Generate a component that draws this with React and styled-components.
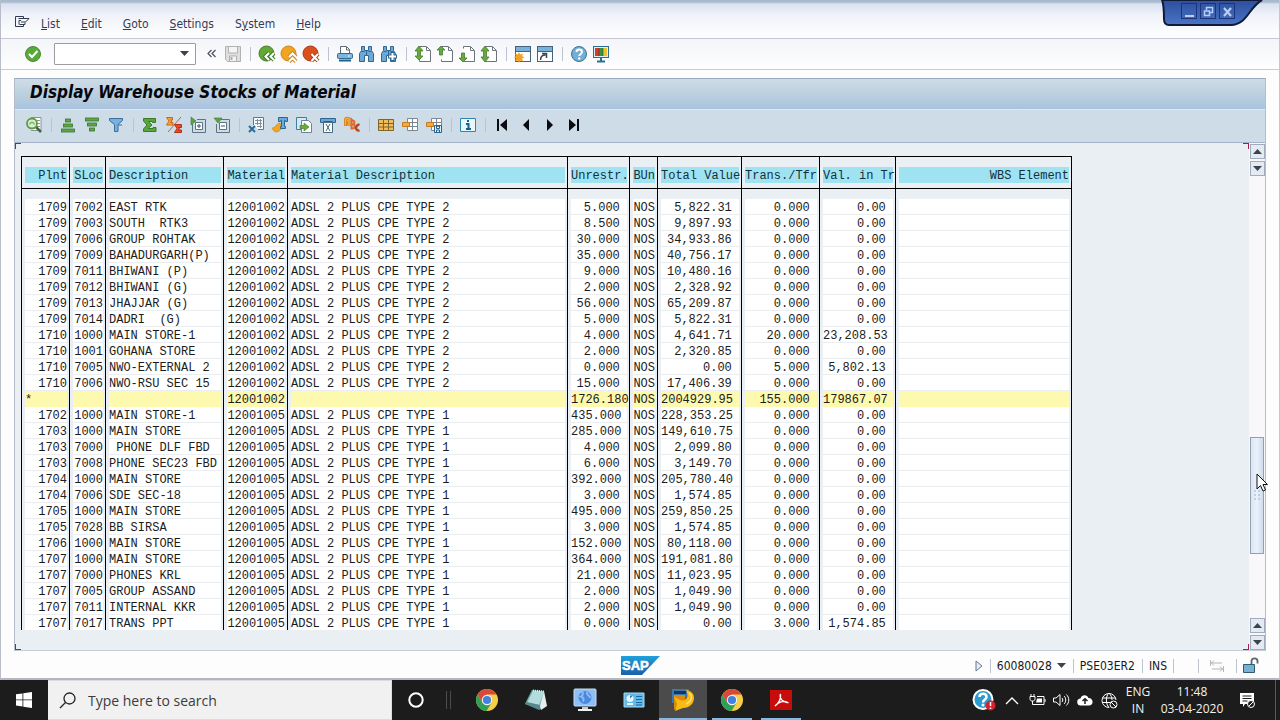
import React from 'react';
import styled, { createGlobalStyle, css } from 'styled-components';

const GlobalStyle = createGlobalStyle`
  * {
    box-sizing: border-box;
  }

  body {
    margin: 0;
    font-family: 'DejaVu Sans Condensed', Tahoma, sans-serif;
    font-size: 12px;
    color: #1f2a44;
  }

  button {
    font: inherit;
    color: inherit;
    border: 0;
    padding: 0;
    background: none;
  }
`;

const Screen = styled.div`
  display: flex;
  flex-direction: column;
  height: 100vh;
  overflow: hidden;
`;

const SapWindow = styled.main`
  position: relative;
  flex: 1;
  min-height: 0;
  display: flex;
  flex-direction: column;
  background: #fdfdfe;
  border-left: 1px solid #b9bcc9;
  border-right: 1px solid #c3c6d4;
  border-bottom: 2px solid #b4b6c0;
`;

const MenuBar = styled.nav`
  display: flex;
  align-items: center;
  gap: 21px;
  height: 39px;
  padding: 9px 13px 0;
  background: linear-gradient(#a9b9cf 0, #a9b9cf 2px, #d9e2f0 4px, #eef1f8 14px, #fcfcfe 32px);
  border-bottom: 1px solid #c6c8d4;
`;

const MenuIcon = styled.button`
  width: 16px;
  height: 20px;
  margin-right: -10px;
`;

const MenuItem = styled.button`
  line-height: 16px;
  color: #343c5c;
`;

const WindowControls = styled.div`
  position: absolute;
  top: 0;
  right: 16px;
  width: 102px;
  height: 28px;

  > svg {
    position: absolute;
  }
`;

const ControlRow = styled.div`
  position: relative;
  display: flex;
  gap: 3px;
  padding: 3px 0 0 20px;
`;

const ControlButton = styled.button`
  width: 16px;
  height: 16px;
  border: 1px solid #1f3478;
  color: #b9cdf5;
  line-height: 0;
`;

const StandardBar = styled.div`
  display: flex;
  align-items: center;
  height: 31px;
  padding: 0 0 1px 21px;
  background: linear-gradient(#f4f5fa, #fefefe);
  border-bottom: 1px solid #c9cbd6;
`;

const IconButton = styled.button`
  display: flex;
  align-items: center;
  justify-content: center;
  flex: none;
  width: ${p => p.$size || 22}px;
  height: 24px;
`;

const Separator = styled.span`
  flex: none;
  width: 2px;
  height: 14px;
  margin: 0 ${p => p.$gap || 5}px;
  border-right: 1px solid #bcc3ce;
`;

const CommandBox = styled.label`
  display: flex;
  align-items: center;
  width: 142px;
  height: 22px;
  margin: 0 4px 0 10px;
  padding-right: 6px;
  background: #fff;
  border: 1px solid #9a9ca2;
  border-radius: 1px;
`;

const CommandInput = styled.input`
  flex: 1;
  min-width: 0;
  border: 0;
  outline: 0;
  background: none;
`;

const Panel = styled.section`
  flex: 1;
  min-height: 0;
  display: flex;
  flex-direction: column;
  margin: 8px 13px 0;
  border: 1px solid #99a9bf;
  border-color: #99a9bf #b4bccd #c6cdd4 #b4bccd;
`;

const TitleBar = styled.header`
  height: 31px;
  padding: 0 15px;
  background: linear-gradient(#cfdce8, #bcd0de 50%, #a9c3de);
  border-bottom: 1px solid #dfe8f0;
`;

const Title = styled.h1`
  margin: 0;
  font-size: 17px;
  font-style: italic;
  font-weight: 700;
  line-height: 26px;
  color: #05070c;
`;

const AppBar = styled.div`
  display: flex;
  align-items: center;
  height: 33px;
  padding: 0 0 3px 7px;
  background: #cddce7;
  border-bottom: 1px solid #a4b1c6;
`;

const ListArea = styled.div`
  position: relative;
  flex: 1;
  min-height: 0;
  display: flex;
  background: #eaeff4;
`;

const Corner = styled.i`
  position: absolute;
  width: 6px;
  height: 6px;
  border: 0 solid #a02048;
  ${p => (p.$bottom ? css`bottom: 0; border-bottom-width: 1px;` : css`top: 0; border-top-width: 1px;`)}
  ${p => (p.$right ? css`right: 16px; border-right-width: 1px;` : css`left: 0; border-left-width: 1px;`)}
`;

const ListView = styled.div`
  flex: 1;
  min-width: 0;
  margin: 13px 0 20px 6px;
  overflow: hidden;
`;

const StockTable = styled.table`
  table-layout: fixed;
  width: 1051px;
  border-collapse: separate;
  border-spacing: 0;
  border-right: 1px solid #000;
  font-family: 'Liberation Mono', 'Courier New', monospace;
  font-size: 12px;
  line-height: 14px;
  color: #1c1c1c;
`;

const HeadCell = styled.th`
  padding: 12px 2px 5px 3px;
  border: solid #000;
  border-width: 1px 0 1px 1px;
  background: linear-gradient(#9fe3f2, #9fe3f2) left 3px bottom 5px / calc(100% - 5px) 16px no-repeat;
  font-weight: 400;
  text-align: ${p => p.$align || 'left'};
  white-space: pre;
  color: #12303d;
`;

const Cell = styled.td`
  height: 16px;
  padding: 2px 2px 0 3px;
  border-left: 1px solid #000;
  background: linear-gradient(${p => (p.$total ? '#fdf9ae, #fdf9ae' : '#fff 15px, #ebeef0 15px')})
    left 3px bottom / calc(100% - 5px) 16px no-repeat;
  text-align: ${p => p.$align || 'left'};
  white-space: pre;

  tr:first-child > & {
    padding-top: 12px;
  }
`;

const ScrollBar = styled.div`
  display: flex;
  flex-direction: column;
  gap: 2px;
  width: 16px;
  padding: 1px 0 0 1px;
  background: #f8f8fb;
`;

const ScrollButton = styled.button`
  display: flex;
  align-items: center;
  justify-content: center;
  width: 15px;
  height: 15px;
  border: 1px solid #a3acbf;
  background: #e3eaf1;
`;

const ScrollTrack = styled.div`
  flex: 1;
  display: flex;
  flex-direction: column;
`;

const ScrollGap = styled.div`
  flex: ${p => p.$share};
`;

const ScrollThumb = styled.div`
  flex: 116;
  display: flex;
  align-items: center;
  justify-content: center;
  width: 14px;
  border: 1px solid #93a0b3;
  background: linear-gradient(90deg, #dce6f3, #e9f1fb 50%, #cfdcec);
`;

const MousePointer = styled.svg`
  position: absolute;
  right: -3px;
  top: 330px;
`;

const StatusBar = styled.footer`
  display: grid;
  grid-template-columns: 1fr auto 1fr;
  align-items: center;
  height: 27px;
  padding: 2px 19px 0;
  color: #17191f;
`;

const StatusFields = styled.div`
  display: flex;
  align-items: center;
  justify-content: flex-end;
`;

const StatusGap = styled.span`
  width: ${p => p.$width}px;
`;

const TaskBar = styled.footer`
  display: flex;
  align-items: stretch;
  height: 40px;
  background: #1c1c1c;
  color: #f3f3f3;
`;

const SearchBox = styled.label`
  display: flex;
  align-items: center;
  gap: 10px;
  width: 344px;
  padding-left: 11px;
  background: #f1f1f1;
  border: 1px solid #dcdcdc;
  border-left: 0;
`;

const SearchInput = styled.input`
  flex: 1;
  min-width: 0;
  border: 0;
  outline: 0;
  background: none;
  font-family: 'Open Sans', 'Segoe UI', sans-serif;
  font-size: 14px;

  &::placeholder {
    color: #3c3c3c;
    opacity: 1;
  }
`;

const TaskButton = styled.button`
  display: flex;
  align-items: center;
  justify-content: center;
  width: ${p => p.$width || 49}px;
  background: ${p => (p.$active ? '#4b4b4b' : 'none')};
`;

const OpenTask = styled(TaskButton)`
  width: ${p => (p.$active ? 48 : 40)}px;
  margin: ${p => (p.$active ? '0 5px 0 1px' : '0 9px 0 0')};
  padding-top: 2px;
  border-bottom: 2px solid #86b9e4;
`;

const Tray = styled.div`
  display: flex;
  align-items: stretch;
  margin-left: auto;
  padding-right: 4px;
  font-family: 'Open Sans', 'Segoe UI', sans-serif;
`;

const TrayText = styled.button`
  width: ${p => p.$width}px;
  line-height: 17px;
  text-align: center;
  white-space: pre-line;
`;

const DesktopEdge = styled.span`
  width: 1px;
  background: #5a5a5a;
`;

const Icon = ({ children, w = 18, h = 18, box }) => (
  <svg width={w} height={h} viewBox={box || `0 0 ${w} ${h}`} fill="none" aria-hidden="true">
    {children}
  </svg>
);

const DownArrow = ({ up }) => (
  <Icon w={9} h={5}><path d={up ? 'M0 5L4.500 0 9 5z' : 'M0 0h9L4.500 5z'} fill="#3a434e" /></Icon>
);

const CheckIcon = () => (
  <Icon>
    <circle cx="9" cy="9" r="7.500" fill="#58a83a" stroke="#478c32" />
    <path d="M5 9l3 3 5.500-6" stroke="#fff" strokeWidth="2" />
  </Icon>
);

const SaveIcon = () => (
  <Icon>
    <path d="M1.500 1.500h15v15h-13l-2-2z" fill="#dedede" stroke="#b1b1b1" />
    <path d="M4.500 2v6h9V2M5.500 16v-5h7v5" fill="#f4f4f4" stroke="#b1b1b1" />
    <path d="M7.500 12v3" stroke="#aaa" strokeWidth="2" />
  </Icon>
);

const BallIcon = ({ kind }) => {
  const fill = { back: '#62a834', up: '#f2a421', cancel: '#d9501c' }[kind];
  const edge = { back: '#447c28', up: '#c98420', cancel: '#a63c14' }[kind];
  const mark = {
    back: 'M11 8l-3.500 3.500L11 15M16 8l-3.500 3.500L16 15',
    up: 'M9 12l3.500-3.500L16 12M9 16.500l3.500-3.500 3.500 3.500',
    cancel: 'M9.500 9l6.500 7M16 9l-6.500 7',
  }[kind];
  return (
    <Icon>
      <circle cx="8.500" cy="8.500" r="7.500" fill={fill} stroke={edge} />
      <path d={mark} stroke={edge} strokeWidth="4" />
      <path d={mark} stroke="#fff" strokeWidth="2" />
    </Icon>
  );
};

const PrintIcon = () => (
  <Icon>
    <path d="M4.500 8V1.500h6l3 3V8" fill="#fff" stroke="#5c6a78" />
    <path d="M10.500 2v3h3" stroke="#5c6a78" />
    <rect x="1.500" y="8.500" width="15" height="5" rx="1" fill="#7db5dc" stroke="#2d6c94" />
    <path d="M3 15.500h12" stroke="#1f5f88" strokeWidth="2" />
    <path d="M12 11h2" stroke="#fff" />
  </Icon>
);

const FindIcon = ({ plus }) => (
  <Icon>
    <path d="M3.500 1.500h3v4h4v-4h3v4l2 3v8h-5v-6h-4v6h-5v-8l2-3z" fill="#6fa9d3" stroke="#2f6794" />
    <path d="M3.500 6.500h3M10.500 6.500h3M8.500 6v4" stroke="#2f6794" />
    {plus && (
      <>
        <path d="M12.500 7v9M8 11.500h9" stroke="#2f6794" strokeWidth="4" />
        <path d="M12.500 8v7M9 11.500h7" stroke="#fff" strokeWidth="2" />
      </>
    )}
  </Icon>
);

const PageIcon = ({ kind }) => {
  const arrow = {
    first: 'M5 1l4 5H6.500v5H9l-4 4-4-4h2.500V6H1z',
    prev: 'M5 1l4 4H6.500v5h-3V5H1z',
    next: 'M5 17l4-4H6.500V8h-3v5H1z',
    last: 'M5 1l4 5H6.500v6H9l-4 5-4-5h2.500V6H1z',
  }[kind];
  return (
    <Icon>
      <path d="M5.500 3.500v-2h7l4 4v11h-11v-2" fill="#fff" stroke="#6b737b" />
      <path d="M12.500 2v3.500H16" stroke="#6b737b" />
      <path d={arrow} fill="#69a83c" stroke="#3f7f2d" strokeWidth="0.800" />
    </Icon>
  );
};

const WindowIcon = ({ star }) => (
  <Icon>
    <rect x="1.500" y="1.500" width="15" height="15" fill="#fff" stroke="#41637c" />
    <path d="M2 2h14v4H2z" fill="#76b2dc" />
    <path d="M2 6.500h14" stroke="#41637c" />
    {star ? (
      <path d="M5 7l1.200 2.500L9 8.500 8 11l2.500 1.500L8 13.500l1 3-2.800-1L5 18l-1.200-2.500L1 16.500l1-3-2-1L2 11 1 8.500l2.800 1z" fill="#f4a21e" />
    ) : (
      <path d="M4.500 15c0-4 2-5 5-5M6 8.500h4.500V13" stroke="#384653" strokeWidth="1.500" />
    )}
  </Icon>
);

const HelpIcon = () => (
  <Icon>
    <circle cx="9" cy="9" r="7.500" fill="#72afd6" stroke="#3c7194" />
    <path d="M6.500 7c0-3.300 5.500-3.300 5.500 0 0 1.800-2.700 2-2.700 4" stroke="#fff" strokeWidth="1.900" />
    <circle cx="9.200" cy="13.500" r="1.200" fill="#fff" />
  </Icon>
);

const LayoutIcon = () => (
  <Icon>
    <rect x="1.500" y="1.500" width="15" height="11" fill="#dceef6" stroke="#2b6f94" />
    <path d="M3 3h4v8H3z" fill="#d93a25" />
    <path d="M7 3h4v8H7z" fill="#2f9547" />
    <path d="M11 3h4v8h-4z" fill="#efc12b" />
    <path d="M7 3v8M11 3v8" stroke="#333" strokeWidth="0.500" />
    <path d="M9 13v3M5 16.500h8" stroke="#2b6f94" strokeWidth="2" />
  </Icon>
);

const DetailIcon = () => (
  <Icon>
    <path d="M6 1.500h10v13H6" fill="#fff" stroke="#8b9298" />
    <path d="M12 4.500h3M12 7.500h3M12 10.500h3" stroke="#8b9298" />
    <path d="M11 11l5 5" stroke="#47604a" strokeWidth="2.500" />
    <circle cx="7" cy="7.500" r="5" fill="#d9efd1" stroke="#5e9840" strokeWidth="1.800" />
    <path d="M4.500 8.500c1-3 4-3 5 0" stroke="#7bb364" strokeWidth="1.500" />
  </Icon>
);

const SortIcon = ({ desc }) => (
  <Icon>
    <g transform={desc ? 'matrix(1 0 0 -1 0 18)' : undefined} fill="#61a73f" stroke="#39733b" strokeWidth="0.800">
      <rect x="2.500" y="13" width="13" height="3" />
      <rect x="4.500" y="8" width="9" height="3" />
      <rect x="6.500" y="3" width="5" height="3" />
    </g>
  </Icon>
);

const FilterIcon = () => (
  <Icon>
    <path d="M2.500 2.500h13v2l-4.500 4v7H7.500v-7l-5-4z" fill="#79b0dc" stroke="#376f9e" />
    <path d="M11 9h4" stroke="#376f9e" />
  </Icon>
);

const SumIcon = () => (
  <Icon><path d="M2.500 2.500h12v4h-3V5.500h-4L11 9l-4 3.500h5v-1h3v4h-12.500V13L6 9 2.500 5z" fill="#5ba53b" stroke="#3a7a2f" /></Icon>
);

const SubtotalIcon = () => (
  <Icon>
    <path d="M16 1L3 16" stroke="#a66b4e" />
    <path d="M1.500 1.500h6v2.500h-2l1.500 1-1.500 1.500h2.500v2.500h-6.500l2.500-4z" fill="#f7a42b" stroke="#c96a1a" />
    <path d="M9.500 8.500h7v3h-3l1 1-1 1.500h3v2.500h-7l2.500-4z" fill="#ea4a25" stroke="#b52f17" />
  </Icon>
);

const ExpandIcon = ({ minus }) => (
  <Icon>
    <path d="M8 3.500h8.500v13h-13V8" stroke="#5b7485" />
    <path d="M6.500 6.500h7v7h-7z" fill="#fff" stroke="#5b7485" />
    <path d={minus ? 'M8 10h4' : 'M8 10h4M10 8v4'} stroke="#34505f" />
    <path d={minus ? 'M1 2h8L5 7z' : 'M2 1l5 4-5 4z'} fill="#5ca33f" stroke="#3c7a32" strokeWidth="0.600" />
  </Icon>
);

const ExcelIcon = () => (
  <Icon>
    <path d="M6.500 9V1.500h10v12H11" fill="#f7fafc" stroke="#67757f" />
    <path d="M8 4.500h7M8 7.500h7M10 10.500h5M10.500 3v6M13.500 3v9" stroke="#85929b" />
    <path d="M2 10l6 6M8 10l-6 6" stroke="#286d97" strokeWidth="2" />
  </Icon>
);

const WordIcon = () => (
  <Icon>
    <path d="M1 12c4 0 3-4 8-5l2 3c-1 4-3 6-6 6-2 0-3-2-4-4z" fill="#f4a51f" stroke="#c77f19" strokeWidth="0.600" />
    <path d="M7.500 1.500h9v4h-2v-1h-1v6h1v2h-5v-2h1v-6h-1v1h-2z" fill="#6cabd8" stroke="#2c6690" />
  </Icon>
);

const ExportIcon = () => (
  <Icon>
    <path d="M1.500 1.500h10v12h-10z" fill="#d3e9f4" stroke="#3f7da3" />
    <path d="M6.500 4.500h7l3 3v9h-10z" fill="#fff" stroke="#6f8291" />
    <path d="M5 9.500h4V7l5 4-5 4v-2.500H5z" fill="#67ab3f" stroke="#3c7a32" strokeWidth="0.600" />
  </Icon>
);

const MailTextIcon = () => (
  <Icon>
    <path d="M1.500 2.500h15v4h-3v-1h-9v1h-3z" fill="#69a7d2" stroke="#2c6690" />
    <path d="M4.500 6.500h9v10h-9z" fill="#fff" stroke="#47697f" />
    <path d="M7 8l4 7M11 8l-4 7" stroke="#47697f" />
  </Icon>
);

const AbcIcon = () => (
  <Icon>
    <path d="M2.500 10V4c0-2.500 3.500-2.500 3.500 0v6M2.500 7H6" stroke="#d67a1c" strokeWidth="3" />
    <path d="M2.500 9.500V4c0-2.500 3.500-2.500 3.500 0v5.500" stroke="#f7b13c" strokeWidth="1.500" />
    <path d="M8.500 3.500v9h1c3 0 3-4 0-4 2.500 0 2.500-4 0-4z" stroke="#e2692a" strokeWidth="2" />
    <path d="M16.500 9c-4-1.500-5 6.500 0 5.500" stroke="#b8462a" strokeWidth="2.500" />
  </Icon>
);

const GridIcon = ({ kind }) => (
  <Icon>
    {!kind && <path d="M1.500 3.500h15v11h-15zM1.500 7.500h15M1.500 11h15M6.500 3.500v11M11.500 3.500v11" fill="#f2bd58" stroke="#7d6431" />}
    {kind && (
      <>
        <path d="M6.500 2.500h10v12h-10zM6.500 6.500h10M6.500 10.500h10M11.500 2.500v12" fill="#fff" stroke="#7c8791" />
        <path d="M1.500 6.500h7v4h-7z" fill="#f5a93c" stroke="#c47b22" />
      </>
    )}
    {kind === 'save' && <path d="M9.500 9.500h7v7h-7zM11.500 9.500v3h3v-3M11.500 16v-2h3v2" fill="#dceffa" stroke="#27648c" />}
  </Icon>
);

const InfoIcon = () => (
  <Icon>
    <path d="M1.500 2.500h15v13h-15z" fill="#e9f7fd" stroke="#2c86b1" />
    <path d="M9 4v2M7 8h2.500v5M7 13h5" stroke="#15618b" strokeWidth="2" />
  </Icon>
);

const StepIcon = ({ kind }) => {
  const flip = kind === 'next' || kind === 'last';
  const bar = kind === 'first' || kind === 'last';
  return (
    <Icon>
      <g transform={flip ? 'matrix(-1 0 0 1 18 0)' : undefined} fill="#0a0c12">
        <path d={bar ? 'M14 3v12L7 9zM4 3h2v12H4z' : 'M12 3v12L6 9z'} />
      </g>
    </Icon>
  );
};

const ChromeIcon = () => (
  <Icon w={22} h={22}>
    <circle cx="11" cy="11" r="11" fill="#f6cf46" />
    <path d="M1.500 5.500A11 11 0 0 1 20.500 5.500H11L6.300 13.800z" fill="#d9493a" />
    <path d="M1.500 5.500A11 11 0 0 0 10.500 22l5-8.300H6.300z" fill="#2f9e58" />
    <circle cx="11" cy="11" r="5.200" fill="#f3f3f3" />
    <circle cx="11" cy="11" r="4.100" fill="#4480de" />
  </Icon>
);

const NotebookIcon = () => (
  <Icon w={24} h={24}>
    <path d="M8 2l12 1-3 17-16-4z" fill="#6faeb1" />
    <path d="M9 3l11 1-5 13-12-2z" fill="#b4dcdc" />
    <path d="M1 16l2-2 13 3 1 4-2 1z" fill="#57898c" />
    <path d="M20 3l3 15-6 4-1-4z" fill="#e4eeee" />
    <path d="M9 2.500l11 1" stroke="#eee" strokeWidth="2" strokeDasharray="1 1" />
  </Icon>
);

const RemoteIcon = () => (
  <Icon w={24} h={24}>
    <rect x="1" y="1" width="22" height="17" rx="1" fill="#8fc0f5" stroke="#c8dcf3" />
    <circle cx="12" cy="9.500" r="6.500" fill="#4b88de" />
    <path d="M8 3.500c3 1 2 4 0 5 3 1 3 3 2 5M14 4c-1 3 3 3 3 6" stroke="#8dbcf5" strokeWidth="2" />
    <path d="M9 19h6v2H9z" fill="#c4ccd4" />
    <path d="M5 21h14v2H5z" fill="#eef1f4" />
  </Icon>
);

const CardIcon = () => (
  <Icon w={22} h={18}>
    <path d="M1 2h20v14H1z" fill="#62b9ea" stroke="#a5daf5" />
    <circle cx="7" cy="7.500" r="3.500" fill="#e9f6fd" />
    <path d="M7 7.500V4.500h3z" fill="#2b77b2" />
    <path d="M4 13h6" stroke="#e9f6fd" strokeWidth="2" />
    <path d="M13 5.500h6M13 8.500h6M13 11.500h6M13 14h6" stroke="#1d669f" />
  </Icon>
);

const SapGuiIcon = () => (
  <Icon w={24} h={24}>
    <path d="M1 1h17l-4 14H1z" fill="#3b76ad" />
    <path d="M3 3h12v3H3z" fill="#15365c" />
    <path d="M3 7h11v6L3 22z" fill="#d98a08" />
    <path d="M3 8c5 5 9 5 11 4 3-2 3-6 1-10 8 1 10 8 6 14-3 3-6 4-9 4l-8 3 2-7z" fill="#fbb914" />
    <path d="M18 5c4 3 3 8-3 11" stroke="#ffe27a" strokeWidth="1.500" />
  </Icon>
);

const PdfIcon = () => (
  <Icon w={22} h={22}>
    <path d="M0 1h22v20H0z" fill="#c80c0c" />
    <path d="M5 17c4-3 6-8 5.500-12C9 9 13 14 17.500 13.500 14 11 8 13 5 17z" stroke="#fff" strokeWidth="1.300" />
  </Icon>
);

const SapLogo = () => (
  <svg width="39" height="19" viewBox="0 0 39 19" role="img" aria-label="SAP">
    <defs>
      <linearGradient id="sapBlue" x1="0" y1="0" x2="0" y2="1">
        <stop offset="0" stopColor="#1fa0dc" />
        <stop offset="1" stopColor="#1b5fa9" />
      </linearGradient>
    </defs>
    <path d="M0 0h39L21 19H0z" fill="url(#sapBlue)" />
    <text x="1" y="14" fontFamily="Liberation Sans, Arial, sans-serif" fontSize="13" fontWeight="700" fill="#fff" stroke="#fff" strokeWidth="0.500">SAP</text>
  </svg>
);

const columns = [
  { name: 'Plnt', width: 48, align: 'right' },
  { name: 'SLoc', width: 36, align: 'right' },
  { name: 'Description', width: 118 },
  { name: 'Material', width: 64, align: 'right' },
  { name: 'Material Description', width: 280 },
  { name: 'Unrestr.', width: 62, align: 'right', number: true },
  { name: 'BUn', width: 28, align: 'right' },
  { name: 'Total Value', width: 84, align: 'right', number: true },
  { name: 'Trans./Tfr', width: 78, align: 'right', number: true },
  { name: 'Val. in Tr', width: 76, align: 'right', number: true },
  { name: 'WBS Element', width: 176, align: 'right' },
];

const stock = (type, list) =>
  list.map(([plant, sloc, text, free, value, transit = '0.000', transitValue = '0.00']) => [
    plant, sloc, text, `1200100${type === 2 ? 2 : 5}`, `ADSL 2 PLUS CPE TYPE ${type}`,
    free, 'NOS', value, transit, transitValue, '',
  ]);

const rows = [
  ...stock(2, [
    ['1709', '7002', 'EAST RTK', '5.000', '5,822.31'],
    ['1709', '7003', 'SOUTH  RTK3', '8.500', '9,897.93'],
    ['1709', '7006', 'GROUP ROHTAK', '30.000', '34,933.86'],
    ['1709', '7009', 'BAHADURGARH(P)', '35.000', '40,756.17'],
    ['1709', '7011', 'BHIWANI (P)', '9.000', '10,480.16'],
    ['1709', '7012', 'BHIWANI (G)', '2.000', '2,328.92'],
    ['1709', '7013', 'JHAJJAR (G)', '56.000', '65,209.87'],
    ['1709', '7014', 'DADRI  (G)', '5.000', '5,822.31'],
    ['1710', '1000', 'MAIN STORE-1', '4.000', '4,641.71', '20.000', '23,208.53'],
    ['1710', '1001', 'GOHANA STORE', '2.000', '2,320.85'],
    ['1710', '7005', 'NWO-EXTERNAL 2', '0.000', '0.00', '5.000', '5,802.13'],
    ['1710', '7006', 'NWO-RSU SEC 15', '15.000', '17,406.39'],
  ]),
  ['*     ', '', '', '12001002', '', '1726.180', 'NOS', '2004929.95', '155.000', '179867.07', ''],
  ...stock(1, [
    ['1702', '1000', 'MAIN STORE-1', '435.000', '228,353.25'],
    ['1703', '1000', 'MAIN STORE', '285.000', '149,610.75'],
    ['1703', '7000', ' PHONE DLF FBD', '4.000', '2,099.80'],
    ['1703', '7008', 'PHONE SEC23 FBD', '6.000', '3,149.70'],
    ['1704', '1000', 'MAIN STORE', '392.000', '205,780.40'],
    ['1704', '7006', 'SDE SEC-18', '3.000', '1,574.85'],
    ['1705', '1000', 'MAIN STORE', '495.000', '259,850.25'],
    ['1705', '7028', 'BB SIRSA', '3.000', '1,574.85'],
    ['1706', '1000', 'MAIN STORE', '152.000', '80,118.00'],
    ['1707', '1000', 'MAIN STORE', '364.000', '191,081.80'],
    ['1707', '7000', 'PHONES KRL', '21.000', '11,023.95'],
    ['1707', '7005', 'GROUP ASSAND', '2.000', '1,049.90'],
    ['1707', '7011', 'INTERNAL KKR', '2.000', '1,049.90'],
    ['1707', '7017', 'TRANS PPT', '0.000', '0.00', '3.000', '1,574.85'],
  ]),
];

// amounts keep one blank at the end for the sign, unless they fill the column
const cellText = (value, column) =>
  column.number && value !== '1726.180' ? `${value} ` : value;

const menus = [['', 'L', 'ist'], ['', 'E', 'dit'], ['', 'G', 'oto'], ['', 'S', 'ettings'], ['S', 'y', 'stem'], ['', 'H', 'elp']];

const standardTools = [
  [['Save', <SaveIcon />]],
  [['Back', <BallIcon kind="back" />], ['Exit', <BallIcon kind="up" />], ['Cancel', <BallIcon kind="cancel" />]],
  [['Print', <PrintIcon />], ['Find', <FindIcon />], ['Find next', <FindIcon plus />]],
  [['First page', <PageIcon kind="first" />], ['Previous page', <PageIcon kind="prev" />], ['Next page', <PageIcon kind="next" />], ['Last page', <PageIcon kind="last" />]],
  [['New session', <WindowIcon star />], ['Create shortcut', <WindowIcon />]],
  [['Help', <HelpIcon />], ['Customize layout', <LayoutIcon />]],
];

const listTools = [
  [['Details', <DetailIcon />]],
  [['Sort ascending', <SortIcon />], ['Sort descending', <SortIcon desc />], ['Filter', <FilterIcon />]],
  [['Total', <SumIcon />], ['Subtotal', <SubtotalIcon />], ['Expand', <ExpandIcon />], ['Collapse', <ExpandIcon minus />]],
  [['Spreadsheet', <ExcelIcon />], ['Word processing', <WordIcon />], ['Local file', <ExportIcon />], ['Send', <MailTextIcon />], ['ABC analysis', <AbcIcon />]],
  [['Change layout', <GridIcon />], ['Select layout', <GridIcon kind="pick" />], ['Save layout', <GridIcon kind="save" />]],
  [['Information', <InfoIcon />]],
  [['First column', <StepIcon kind="first" />], ['Column left', <StepIcon kind="prev" />], ['Column right', <StepIcon kind="next" />], ['Last column', <StepIcon kind="last" />]],
];

const ToolGroups = ({ groups, size, gap }) =>
  groups.map((tools, i) => (
    <React.Fragment key={tools[0][0]}>
      {i > 0 && <Separator $gap={gap} />}
      {tools.map(([label, icon]) => (
        <IconButton key={label} $size={size} aria-label={label}>{icon}</IconButton>
      ))}
    </React.Fragment>
  ));

const Menu = () => (
  <MenuBar>
    <MenuIcon aria-label="System menu">
      <Icon w={16} h={14}>
        <path d="M9.500 3V1.500h-8v10h8V10" stroke="#333b52" />
        <path d="M4.500 3.500H15L11.500 7H7M11 7.500v2H5.500M7 5.500h-2v4" stroke="#333b52" />
      </Icon>
    </MenuIcon>
    {menus.map(([before, key, after]) => (
      <MenuItem key={key}>{before}<u>{key}</u>{after}</MenuItem>
    ))}
  </MenuBar>
);

const Controls = () => (
  <WindowControls>
    <Icon w={102} h={28}>
      <defs>
        <linearGradient id="tab" x1="0" y1="0" x2="0" y2="1">
          <stop offset="0" stopColor="#2c4f9e" />
          <stop offset="1" stopColor="#4a74c4" />
        </linearGradient>
      </defs>
      <path d="M1 0c2 5 2 10 2 19 0 4 2 6 5 6h62c16 0 18-18 31-25z" fill="url(#tab)" stroke="#101a38" strokeWidth="2" />
    </Icon>
    <ControlRow>
      <ControlButton aria-label="Minimize"><Icon w={13} h={13}><path d="M2 11h9" stroke="currentColor" strokeWidth="2" /></Icon></ControlButton>
      <ControlButton aria-label="Restore"><Icon w={13} h={13}><path d="M4.500 5V2.500h6v5H8M2.500 6h5v4.500h-5z" stroke="currentColor" strokeWidth="1.500" /></Icon></ControlButton>
      <ControlButton aria-label="Close"><Icon w={13} h={13}><path d="M3 3l7 8M10 3l-7 8" stroke="currentColor" strokeWidth="2.200" /></Icon></ControlButton>
    </ControlRow>
  </WindowControls>
);

const StockList = () => (
  <StockTable>
    <colgroup>
      {columns.map(c => <col key={c.name} style={{ width: c.width }} />)}
    </colgroup>
    <thead>
      <tr>{columns.map(c => <HeadCell key={c.name} $align={c.align}>{c.name}</HeadCell>)}</tr>
    </thead>
    <tbody>
      {rows.map((row, i) => (
        <tr key={i}>
          {row.map((value, j) => (
            <Cell key={j} $align={columns[j].align} $total={row[1] === ''}>
              {value && cellText(value, columns[j])}
            </Cell>
          ))}
        </tr>
      ))}
    </tbody>
  </StockTable>
);

const Scroller = () => (
  <ScrollBar>
    <ScrollButton aria-label="Page up"><DownArrow up /></ScrollButton>
    <ScrollButton aria-label="Line down"><DownArrow /></ScrollButton>
    <ScrollTrack>
      <ScrollGap $share={261} />
      <ScrollThumb>
        <Icon w={6} h={10}><path d="M1 0v10M5 0v10" stroke="#9fb0c6" strokeWidth="1" strokeDasharray="2 2" /></Icon>
      </ScrollThumb>
      <ScrollGap $share={63} />
    </ScrollTrack>
    <ScrollButton aria-label="Line up"><DownArrow up /></ScrollButton>
    <ScrollButton aria-label="Page down"><DownArrow /></ScrollButton>
    <MousePointer width="12" height="19" viewBox="0 0 12 19">
      <path d="M1 1v15l3.500-3.500L7 18l2.500-1L7 11.500h4.500z" fill="#fff" stroke="#111" />
    </MousePointer>
  </ScrollBar>
);

const Status = () => (
  <StatusBar>
    <span />
    <SapLogo />
    <StatusFields>
      <Icon w={8} h={12}><path d="M1 1l6 5-6 5z" fill="#e7edf6" stroke="#66748e" /></Icon>
      <Separator $gap={6} />
      60080028
      <StatusGap $width={5} />
      <DownArrow />
      <Separator $gap={6} />
      PSE03ER2
      <Separator $gap={6} />
      INS
      <Separator $gap={5} />
      <StatusGap $width={13} />
      <Separator $gap={5} />
      <StatusGap $width={5} />
      <Icon w={16} h={14}><path d="M1.500 1v6M14.500 7v6M2 4h11M5 1.500L2.500 4 5 6.500M3 10h11M11 7.500l2.500 2.500-2.500 2.500" stroke="#b3b6ba" /></Icon>
      <StatusGap $width={5} />
      <Separator $gap={5} />
      <Icon w={18} h={17}>
        <path d="M1.500 7.500h11v8h-11z" fill="#76b1d2" stroke="#315b75" />
        <path d="M9.500 7V4c0-3.500 6-3.500 6 0v2.500" stroke="#5b6770" strokeWidth="1.800" />
      </Icon>
    </StatusFields>
  </StatusBar>
);

const WindowsTaskBar = () => (
  <TaskBar>
    <TaskButton aria-label="Start" $width={48}>
      <Icon w={16} h={16}><path d="M0 2.300l6.500-.9v6.100H0zM7.300 1.300L16 0v7.500H7.300zM0 8.300h6.500v6.200L0 13.600zM7.300 8.300H16V16l-8.700-1.300z" fill="#fff" /></Icon>
    </TaskButton>
    <SearchBox>
      <Icon w={17} h={17}><circle cx="10.500" cy="6.500" r="5.500" stroke="#222" strokeWidth="1.300" /><path d="M6.500 10.500L1 16" stroke="#222" strokeWidth="1.300" /></Icon>
      <SearchInput type="text" placeholder="Type here to search" aria-label="Type here to search" />
    </SearchBox>
    <TaskButton aria-label="Cortana" $width={48}>
      <Icon w={16} h={16}><circle cx="8" cy="8" r="6.700" stroke="#fff" strokeWidth="2" /></Icon>
    </TaskButton>
    <TaskButton aria-label="Toolbar" $width={22}>
      <Icon w={18} h={18}><path d="M4.500 0v18M8.500 0v18" stroke="#4c4c4c" /></Icon>
    </TaskButton>
    <TaskButton aria-label="Google Chrome"><ChromeIcon /></TaskButton>
    <TaskButton aria-label="Notepad"><NotebookIcon /></TaskButton>
    <TaskButton aria-label="Remote desktop"><RemoteIcon /></TaskButton>
    <TaskButton aria-label="Contacts"><CardIcon /></TaskButton>
    <OpenTask aria-label="SAP Logon" $active><SapGuiIcon /></OpenTask>
    <OpenTask aria-label="Chrome window"><ChromeIcon /></OpenTask>
    <OpenTask aria-label="Acrobat"><PdfIcon /></OpenTask>
    <Tray>
      <TaskButton aria-label="Support" $width={30}>
        <Icon w={24} h={24}>
          <circle cx="11" cy="11.500" r="9.500" fill="#2c9bd0" stroke="#fff" strokeWidth="2" />
          <path d="M7.500 9c0-4.500 7-4.500 7 0 0 2.500-3.500 2.500-3.500 5.500" stroke="#fff" strokeWidth="2.500" />
          <circle cx="11" cy="17" r="1.500" fill="#fff" />
          <circle cx="18.500" cy="17.500" r="5" fill="#d9202c" />
          <path d="M18.500 14v4M18.500 19.500v1.500" stroke="#fff" strokeWidth="1.500" />
        </Icon>
      </TaskButton>
      <TaskButton aria-label="Hidden icons" $width={26}>
        <Icon w={14} h={9}><path d="M1 8l6-6 6 6" stroke="#fff" strokeWidth="1.300" /></Icon>
      </TaskButton>
      <TaskButton aria-label="Battery" $width={24}>
        <Icon w={17} h={14}><path d="M1 3.500h5v2c0 2-1 2.500-2.500 2.500S1 7.500 1 5.500zM2 3.500V1M5 3.500V1M3.500 8v3.500H6M8 3.500h7v8H6" stroke="#fff" /><path d="M8 5.500h5v4H7z" fill="#fff" /><path d="M16 6v3" stroke="#fff" /></Icon>
      </TaskButton>
      <TaskButton aria-label="Volume" $width={24}>
        <Icon w={17} h={14}><path d="M.500 5h2.500l4-3.500v11L3 9H.500zM9 5c1 1 1 3 0 4M11 3c2.300 2 2.300 6 0 8M13.300 1.500c3.300 3 3.300 8 0 11" stroke="#fff" /></Icon>
      </TaskButton>
      <TaskButton aria-label="Cloud sync" $width={24}>
        <Icon w={16} h={12}><path d="M4 11.500a3.500 3.500 0 0 1-.500-7C4.500.500 10 0 11.500 4c5 0 5.500 7 1 7.500z" fill="#fff" /><path d="M8 10V5M5.500 7L8 4.700 10.500 7" stroke="#1c1c1c" strokeWidth="1.500" /></Icon>
      </TaskButton>
      <TaskButton aria-label="Network" $width={24}>
        <Icon w={17} h={17}>
          <path d="M8 15.500A7 7 0 1 1 15 8M1.500 6h13M1.500 10.500H9M8 1C4.500 4 4.500 12 8 15.500M8 1c2 2 3 4.500 3 7" stroke="#fff" />
          <circle cx="12.500" cy="12.500" r="3.500" stroke="#fff" /><path d="M10 10l5 5" stroke="#fff" />
        </Icon>
      </TaskButton>
      <TrayText $width={34}>{'ENG\nIN'}</TrayText>
      <TrayText $width={74}>{'11:48\n03-04-2020'}</TrayText>
      <TaskButton aria-label="Notifications" $width={36}>
        <Icon w={17} h={17}>
          <path d="M1 1h14v11H6l-2 3v-3H1z" fill="#fff" />
          <path d="M3.500 4h9M3.500 6.500h9M3.500 9h5" stroke="#1c1c1c" />
          <circle cx="12" cy="12" r="3.500" fill="#1c1c1c" stroke="#fff" /><path d="M10 14l4-4" stroke="#fff" />
        </Icon>
      </TaskButton>
      <TaskButton as="span" $width={10} />
      <DesktopEdge />
    </Tray>
  </TaskBar>
);

const App = () => (
  <Screen>
    <GlobalStyle />
    <SapWindow>
      <Menu />
      <Controls />
      <StandardBar>
        <IconButton aria-label="Enter"><CheckIcon /></IconButton>
        <CommandBox>
          <CommandInput type="text" aria-label="Command" />
          <DownArrow />
        </CommandBox>
        <IconButton aria-label="Hide command field">
          <Icon w={9} h={9}><path d="M4.500 1L1 4.500 4.500 8M8.500 1L5 4.500 8.500 8" stroke="#474d57" strokeWidth="1.200" /></Icon>
        </IconButton>
        <ToolGroups groups={standardTools} />
      </StandardBar>
      <Panel>
        <TitleBar><Title>Display Warehouse Stocks of Material</Title></TitleBar>
        <AppBar><ToolGroups groups={listTools} size={24} gap={4} /></AppBar>
        <ListArea>
          <Corner />
          <Corner $right />
          <Corner $bottom />
          <Corner $bottom $right />
          <ListView><StockList /></ListView>
          <Scroller />
        </ListArea>
      </Panel>
      <Status />
    </SapWindow>
    <WindowsTaskBar />
  </Screen>
);

export default App;
